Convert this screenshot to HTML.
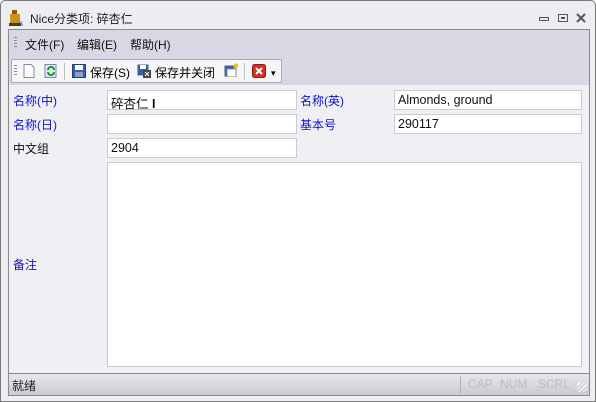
<!DOCTYPE html>
<html><head><meta charset="utf-8"><style>
*{margin:0;padding:0;box-sizing:border-box}
body{width:596px;height:402px;position:relative;background:#fff;font-family:"Liberation Sans","Noto Sans CJK SC",sans-serif;font-size:12px;overflow:hidden}
.win{position:absolute;left:0;top:0;width:596px;height:402px;background:#eceef1;border:1px solid #7a7a7a;border-radius:5px 5px 0 0}
.abs{position:absolute}
.title{left:29px;top:9px;font-size:12px;color:#222}
.frame{left:7px;top:28px;width:582px;height:367px;border:1px solid #8a8a90;background:#eef0f3}
.menu{left:0;top:0;width:580px;height:28px;background:#d8d8e4}
.menu span{position:absolute;top:6px;color:#111}
.tb{left:2px;top:29px;width:271px;height:24px;background:#f6f6f8;border:1px solid #a8a8b4;border-radius:2px}
.tbarea{left:0;top:28px;width:580px;height:27px;background:#d8d8e4}
.lbl{position:absolute;color:#1010d0}
.blk{color:#111}
.inp{position:absolute;background:#fff;border:1px solid #c8cbd2;height:20px;padding:2px 0 0 3px;color:#111;font-size:12.5px}
.status{left:0;top:343px;width:580px;height:22px;border-top:1px solid #8a8a90;background:linear-gradient(#e6e7ea,#c9cbd0)}
.grip{display:inline-block;width:3px;height:12px;background:repeating-linear-gradient(#888 0 1px,transparent 1px 3px);position:absolute}
.ic{position:absolute;width:14px;height:14px}
</style></head><body>
<div class="win">
 <svg class="abs" style="left:7px;top:8px" width="18" height="18"><rect x="2" y="5" width="10" height="9" fill="#c8941c"/><rect x="4" y="1" width="5" height="4" fill="#8a5a10"/><rect x="1" y="14" width="12" height="3" fill="#4a3a20"/><text x="11" y="17" font-size="8" fill="#2040c0" font-family="Liberation Sans">s</text></svg>
 <div class="abs title">Nice分类项: 碎杏仁</div>
 <svg class="abs" style="left:538px;top:12px" width="50" height="10"><rect x="0.5" y="4.5" width="9" height="3" fill="none" stroke="#555"/><rect x="19.5" y="1.5" width="9" height="7" fill="none" stroke="#555"/><rect x="22" y="4" width="4" height="2" fill="#555"/><path d="M38 1 L46 9 M46 1 L38 9" stroke="#555" stroke-width="2"/></svg>
 <div class="abs frame">
  <div class="abs menu">
   <i class="grip" style="left:5px;top:7px"></i>
   <span style="left:16px">文件(F)</span><span style="left:68px">编辑(E)</span><span style="left:121px">帮助(H)</span>
  </div>
  <div class="abs tbarea"></div>
  <div class="abs tb">
   <i class="grip" style="left:2px;top:5px"></i>
   <svg class="ic" style="left:10px;top:4px"><path d="M2 0.5H9L12 3.5V13.5H2Z" fill="#fff" stroke="#7a8aa8"/></svg>
   <svg class="ic" style="left:32px;top:4px"><rect x="1" y="0.5" width="11" height="13" fill="#dde8f4" stroke="#7a8aa8"/><path d="M4 6a3 3 0 0 1 6 0M10 8a3 3 0 0 1-6 0" stroke="#1a9a2a" stroke-width="2" fill="none"/></svg>
   <div class="abs" style="left:52px;top:3px;width:1px;height:17px;background:#bbb"></div>
   <svg class="ic" style="left:60px;top:4px"><rect x="0.5" y="0.5" width="13" height="13" fill="#3a5ea8" stroke="#24407a"/><rect x="3" y="1" width="8" height="5" fill="#fff"/><rect x="3" y="8" width="8" height="5" fill="#8aa0c8"/></svg>
   <span class="abs" style="left:78px;top:4px">保存(S)</span>
   <svg class="ic" style="left:125px;top:4px"><rect x="0.5" y="0.5" width="11" height="11" fill="#3a5ea8"/><rect x="3" y="1" width="6" height="4" fill="#fff"/><rect x="6" y="6" width="8" height="8" fill="#444"/><path d="M8 8L12 12M12 8L8 12" stroke="#fff"/></svg>
   <span class="abs" style="left:143px;top:4px">保存并关闭</span>
   <svg class="ic" style="left:212px;top:3px"><rect x="0.5" y="2.5" width="10" height="11" fill="#3a5ea8"/><rect x="3" y="6" width="9" height="8" fill="#fff" stroke="#888"/><circle cx="12" cy="3" r="2.5" fill="#f0c020"/></svg>
   <div class="abs" style="left:232px;top:3px;width:1px;height:17px;background:#bbb"></div>
   <svg class="ic" style="left:240px;top:4px"><rect x="0.5" y="0.5" width="13" height="13" rx="2" fill="#d03020" stroke="#902010"/><path d="M4 4L10 10M10 4L4 10" stroke="#fff" stroke-width="2"/></svg>
   <span class="abs" style="left:259px;top:8px;font-size:9px">&#9662;</span>
  </div>
  <span class="lbl" style="left:4px;top:62px">名称(中)</span>
  <div class="inp" style="left:98px;top:60px;width:190px">碎杏仁 <span style="font-weight:bold">I</span></div>
  <span class="lbl" style="left:291px;top:62px">名称(英)</span>
  <div class="inp" style="left:385px;top:60px;width:188px">Almonds, ground</div>
  <span class="lbl" style="left:4px;top:86px">名称(日)</span>
  <div class="inp" style="left:98px;top:84px;width:190px"></div>
  <span class="lbl" style="left:291px;top:86px">基本号</span>
  <div class="inp" style="left:385px;top:84px;width:188px">290117</div>
  <span class="lbl blk" style="left:4px;top:110px">中文组</span>
  <div class="inp" style="left:98px;top:108px;width:190px">2904</div>
  <span class="lbl" style="left:4px;top:226px">备注</span>
  <div class="inp" style="left:98px;top:132px;width:475px;height:205px"></div>
  <div class="abs status">
   <span class="abs" style="left:3px;top:3px;color:#222">就绪</span>
   <div class="abs" style="left:451px;top:2px;width:1px;height:18px;background:#b0b0b8"></div>
   <span class="abs" style="left:459px;top:3px;color:#b8bcc4">CAP</span>
   <span class="abs" style="left:491px;top:3px;color:#b8bcc4">NUM</span>
   <span class="abs" style="left:529px;top:3px;color:#b8bcc4">SCRL</span>
   <span class="abs" style="left:568px;top:8px;width:10px;height:10px;background:repeating-linear-gradient(135deg,transparent 0 2px,#fff 2px 3px)"></span>
  </div>
 </div>
</div>
</body></html>
